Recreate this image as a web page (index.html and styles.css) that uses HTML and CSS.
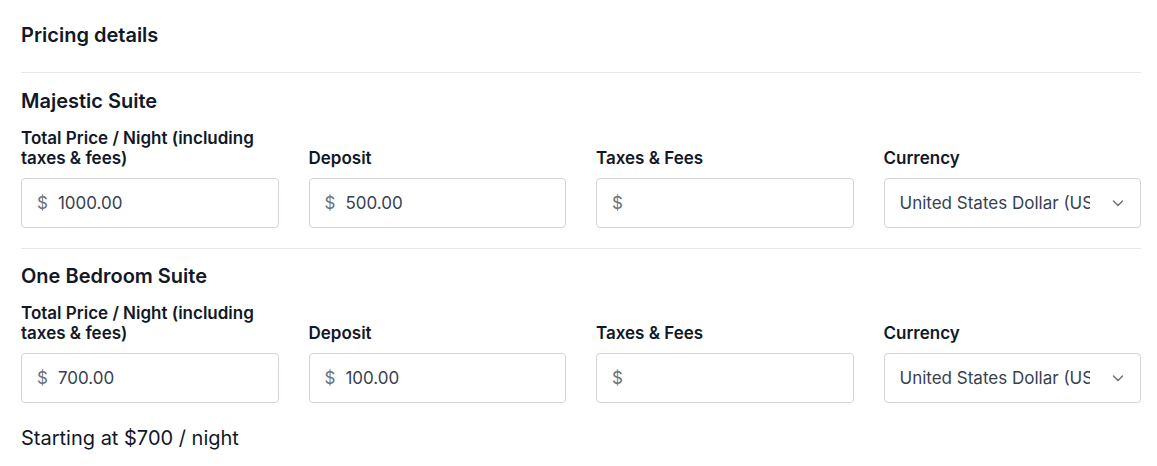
FILE: index.html
```html
<!DOCTYPE html>
<html>
<head>
<meta charset="utf-8">
<link rel="stylesheet" href="styles.css">
</head>
<body>
<div class="page">
  <h2 class="heading">Pricing details</h2>
  <hr class="divider first">
  <section class="room">
    <h3 class="room-title">Majestic Suite</h3>
    <div class="grid">
      <div class="field">
        <label class="label">Total Price / Night (including taxes &amp; fees)</label>
        <div class="control"><span class="prefix">$</span><span class="value">1000.00</span></div>
      </div>
      <div class="field">
        <label class="label">Deposit</label>
        <div class="control"><span class="prefix">$</span><span class="value">500.00</span></div>
      </div>
      <div class="field">
        <label class="label">Taxes &amp; Fees</label>
        <div class="control"><span class="prefix">$</span><span class="value"></span></div>
      </div>
      <div class="field">
        <label class="label">Currency</label>
        <div class="control select"><span class="select-text">United States Dollar (USD)</span>
          <svg class="chevron" width="16" height="16" viewBox="0 0 16 16"><path d="M3.5 6 L8 10.5 L12.5 6" fill="none" stroke="#6b7280" stroke-width="1.5" stroke-linecap="round" stroke-linejoin="round"/></svg>
        </div>
      </div>
    </div>
  </section>
  <hr class="divider">
  <section class="room">
    <h3 class="room-title">One Bedroom Suite</h3>
    <div class="grid">
      <div class="field">
        <label class="label">Total Price / Night (including taxes &amp; fees)</label>
        <div class="control"><span class="prefix">$</span><span class="value">700.00</span></div>
      </div>
      <div class="field">
        <label class="label">Deposit</label>
        <div class="control"><span class="prefix">$</span><span class="value">100.00</span></div>
      </div>
      <div class="field">
        <label class="label">Taxes &amp; Fees</label>
        <div class="control"><span class="prefix">$</span><span class="value"></span></div>
      </div>
      <div class="field">
        <label class="label">Currency</label>
        <div class="control select"><span class="select-text">United States Dollar (USD)</span>
          <svg class="chevron" width="16" height="16" viewBox="0 0 16 16"><path d="M3.5 6 L8 10.5 L12.5 6" fill="none" stroke="#6b7280" stroke-width="1.5" stroke-linecap="round" stroke-linejoin="round"/></svg>
        </div>
      </div>
    </div>
    <p class="summary">Starting at $700 / night</p>
  </section>
</div>
</body>
</html>
```
FILE: styles.css
```css
* { box-sizing: border-box; }
html, body { margin: 0; padding: 0; background: #fff; }
body {
  font-family: Inter, "Noto Sans", "Liberation Sans", sans-serif;
  color: #111827;
}
.page {
  width: 1120px;
  margin-left: 21px;
  padding-top: 21px;
}
.heading {
  margin: 0;
  font-size: 20px;
  line-height: 28px;
  font-weight: 600;
  color: #111827;
}
.divider {
  border: 0;
  border-top: 1px solid #e5e7eb;
  margin: 20px 0 13px;
  height: 0;
}
.divider.first { margin: 23px 0 14px; }
.room-title {
  margin: 0 0 13px;
  font-size: 20px;
  line-height: 28px;
  font-weight: 600;
  color: #111827;
}
.grid {
  display: grid;
  grid-template-columns: repeat(4, minmax(0, 1fr));
  column-gap: 30px;
  align-items: end;
}
.field {
  display: flex;
  flex-direction: column;
  min-width: 0;
}
.label {
  font-size: 17px;
  line-height: 20px;
  font-weight: 600;
  color: #111827;
  margin-bottom: 10px;
}
.control {
  height: 50px;
  border: 1px solid #d1d5db;
  border-radius: 4px;
  display: flex;
  align-items: center;
  padding: 0 15px;
  font-size: 17px;
  color: #374151;
  background: #fff;
}
.prefix {
  color: #6b7280;
  margin-right: 10px;
}
.value { color: #374151; }
.select { padding-right: 14px; }
.select-text {
  flex: 1;
  min-width: 0;
  white-space: nowrap;
  overflow: hidden;
  margin-right: 20px;
  color: #374151;
}
.chevron { flex: none; }
.summary {
  margin: 21px 0 0;
  font-size: 20px;
  line-height: 28px;
  color: #111827;
}
```
